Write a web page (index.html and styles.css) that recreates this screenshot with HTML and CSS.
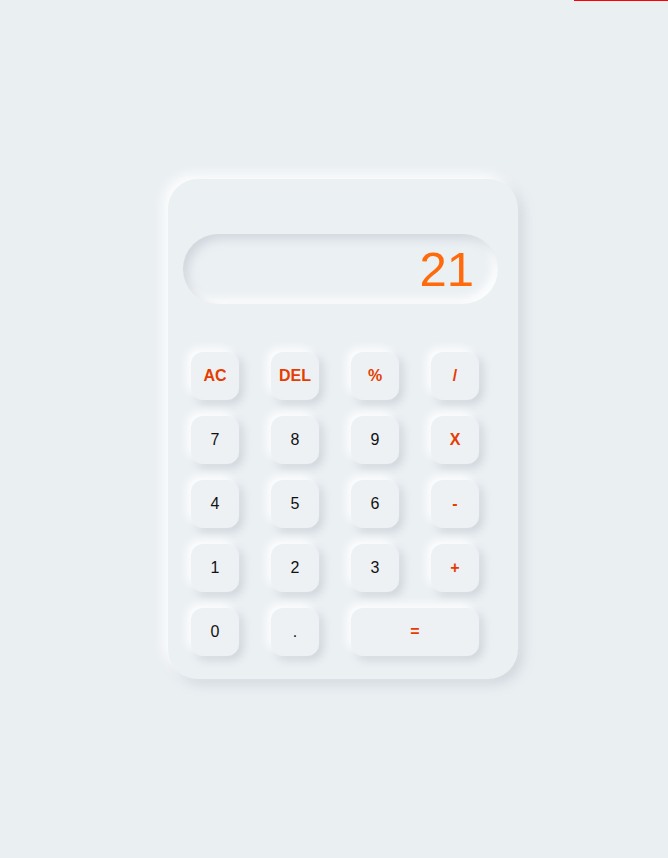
FILE: index.html
```html
<!DOCTYPE html>
<html lang="en">
<head>
<meta charset="utf-8">
<title>Calculator</title>
<link rel="stylesheet" href="styles.css">
</head>
<body>
<div class="topbar"></div>
<main class="page">
  <div class="calc">
    <div class="display"><span class="value">21</span></div>
    <div class="keys">
      <button class="key op">AC</button>
      <button class="key op">DEL</button>
      <button class="key op">%</button>
      <button class="key op">/</button>
      <button class="key">7</button>
      <button class="key">8</button>
      <button class="key">9</button>
      <button class="key op">X</button>
      <button class="key">4</button>
      <button class="key">5</button>
      <button class="key">6</button>
      <button class="key op">-</button>
      <button class="key">1</button>
      <button class="key">2</button>
      <button class="key">3</button>
      <button class="key op">+</button>
      <button class="key">0</button>
      <button class="key">.</button>
      <button class="key op wide">=</button>
    </div>
  </div>
</main>
</body>
</html>
```
FILE: styles.css
```css
* { box-sizing: border-box; }
html, body {
  margin: 0;
  padding: 0;
  height: 100%;
}
body {
  background: #eaeff2;
  font-family: "Liberation Sans", Arial, sans-serif;
  position: relative;
  overflow: hidden;
}
.topbar {
  position: absolute;
  top: 0;
  right: 0;
  width: 94px;
  height: 1px;
  background: #ff0000;
}
.page {
  padding-top: 179px;
  padding-left: 168px;
}
.calc {
  width: 350px;
  height: 500px;
  border-radius: 30px;
  background: #ebf0f3;
  box-shadow: -5px -5px 12px rgba(255,255,255,0.9), 5px 5px 12px rgba(160,170,180,0.35);
  padding: 55px 20px 0 15px;
}
.display {
  width: 315px;
  height: 70px;
  border-radius: 35px;
  background: #ebf0f3;
  box-shadow: inset 5px 5px 10px rgba(160,170,180,0.35), inset -5px -5px 10px rgba(255,255,255,0.95);
  display: flex;
  align-items: center;
  justify-content: flex-end;
  padding-right: 24px;
}
.value {
  color: #ff6a0a;
  font-size: 49px;
  line-height: 1;
}
.keys {
  margin-top: 48px;
  margin-left: 8px;
  display: grid;
  grid-template-columns: repeat(4, 48px);
  grid-auto-rows: 48px;
  column-gap: 32px;
  row-gap: 16px;
}
.key {
  border: none;
  border-radius: 12px;
  background: #edf1f4;
  box-shadow: -4px -4px 8px rgba(255,255,255,0.95), 4px 4px 8px rgba(160,170,180,0.4);
  font-family: "Liberation Sans", Arial, sans-serif;
  font-size: 16px;
  color: #111;
  padding: 0;
  display: flex;
  align-items: center;
  justify-content: center;
}
.op {
  color: #e63c00;
  font-weight: bold;
}
.wide {
  grid-column: span 2;
}
```
